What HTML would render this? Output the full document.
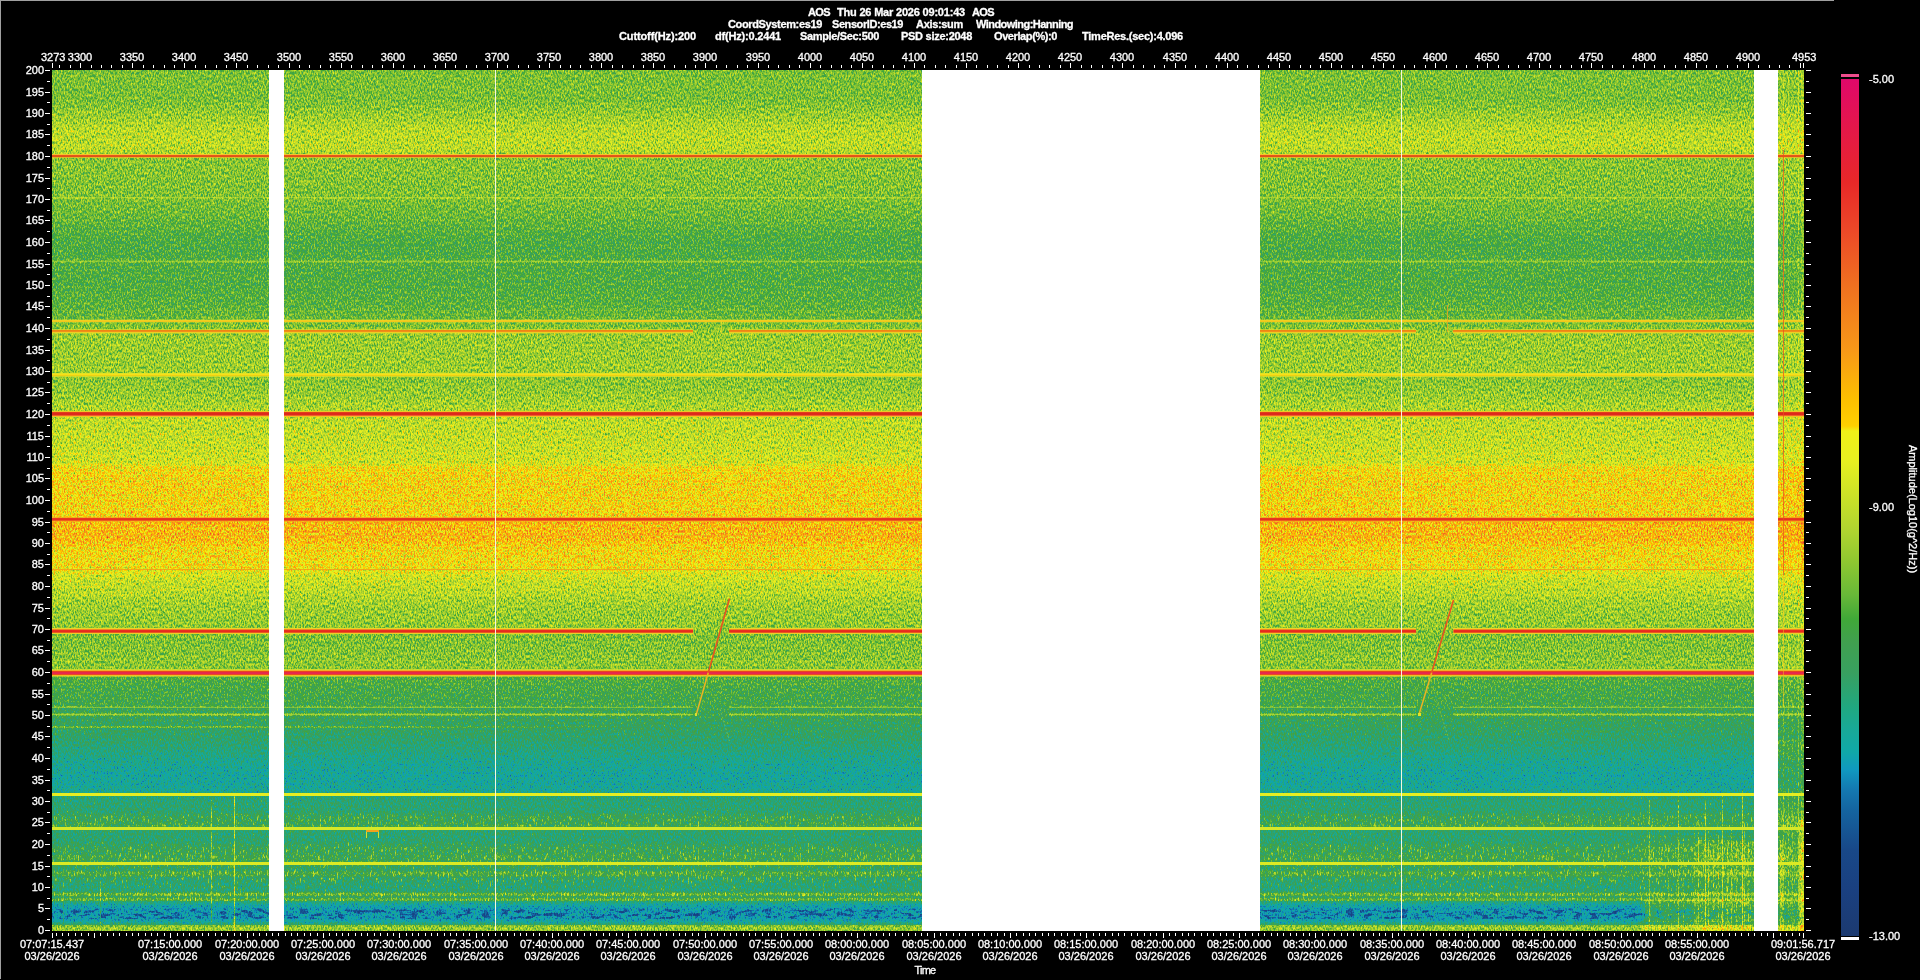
<!DOCTYPE html>
<html lang="en"><head><meta charset="utf-8"><title>AOS Spectrogram es19</title>
<style>
html,body{margin:0;padding:0;background:#000;}
body{width:1920px;height:980px;overflow:hidden;position:relative;font-family:"Liberation Sans",Arial,sans-serif;font-size:11px;color:#fff;line-height:12px;}
.t{position:absolute;white-space:pre;line-height:12px;height:12px;-webkit-text-stroke:0.3px #fff;}
#tx{position:absolute;left:0;top:0;width:1920px;height:980px;will-change:transform;}
.b{font-weight:bold;}
.c{transform:translateX(-50%);text-align:center;}
.r{text-align:right;}
svg{position:absolute;left:0;top:0;}
</style></head><body>
<svg width="1920" height="980" viewBox="0 0 1920 980" shape-rendering="crispEdges">
<defs>
<linearGradient id="prof" gradientUnits="userSpaceOnUse" x1="0" y1="70" x2="0" y2="931">
<stop offset="0.00000" stop-color="rgb(107,0,0)"/>
<stop offset="0.03484" stop-color="rgb(107,0,0)"/>
<stop offset="0.05226" stop-color="rgb(115,0,0)"/>
<stop offset="0.06736" stop-color="rgb(124,0,0)"/>
<stop offset="0.08130" stop-color="rgb(126,0,0)"/>
<stop offset="0.09292" stop-color="rgb(125,0,0)"/>
<stop offset="0.09640" stop-color="rgb(120,0,0)"/>
<stop offset="0.10221" stop-color="rgb(111,0,0)"/>
<stop offset="0.12195" stop-color="rgb(110,0,0)"/>
<stop offset="0.14518" stop-color="rgb(108,0,0)"/>
<stop offset="0.14692" stop-color="rgb(108,0,0)"/>
<stop offset="0.14750" stop-color="rgb(115,0,0)"/>
<stop offset="0.14983" stop-color="rgb(115,0,0)"/>
<stop offset="0.15041" stop-color="rgb(107,0,0)"/>
<stop offset="0.16841" stop-color="rgb(103,0,0)"/>
<stop offset="0.19744" stop-color="rgb(94,0,0)"/>
<stop offset="0.21487" stop-color="rgb(94,0,0)"/>
<stop offset="0.22067" stop-color="rgb(95,0,0)"/>
<stop offset="0.22125" stop-color="rgb(105,0,0)"/>
<stop offset="0.22358" stop-color="rgb(105,0,0)"/>
<stop offset="0.22416" stop-color="rgb(95,0,0)"/>
<stop offset="0.24971" stop-color="rgb(95,0,0)"/>
<stop offset="0.27294" stop-color="rgb(98,0,0)"/>
<stop offset="0.28804" stop-color="rgb(102,0,0)"/>
<stop offset="0.30778" stop-color="rgb(115,0,0)"/>
<stop offset="0.35075" stop-color="rgb(116,0,0)"/>
<stop offset="0.35772" stop-color="rgb(111,0,0)"/>
<stop offset="0.37747" stop-color="rgb(115,0,0)"/>
<stop offset="0.39489" stop-color="rgb(122,0,0)"/>
<stop offset="0.40418" stop-color="rgb(126,0,0)"/>
<stop offset="0.43554" stop-color="rgb(129,0,0)"/>
<stop offset="0.45645" stop-color="rgb(133,0,0)"/>
<stop offset="0.46225" stop-color="rgb(149,0,0)"/>
<stop offset="0.47619" stop-color="rgb(152,0,0)"/>
<stop offset="0.51800" stop-color="rgb(152,0,0)"/>
<stop offset="0.52497" stop-color="rgb(163,0,0)"/>
<stop offset="0.54588" stop-color="rgb(162,0,0)"/>
<stop offset="0.55517" stop-color="rgb(152,0,0)"/>
<stop offset="0.57724" stop-color="rgb(148,0,0)"/>
<stop offset="0.58537" stop-color="rgb(136,0,0)"/>
<stop offset="0.59466" stop-color="rgb(129,0,0)"/>
<stop offset="0.60627" stop-color="rgb(125,0,0)"/>
<stop offset="0.62253" stop-color="rgb(117,0,0)"/>
<stop offset="0.64576" stop-color="rgb(113,0,0)"/>
<stop offset="0.65738" stop-color="rgb(108,0,0)"/>
<stop offset="0.67944" stop-color="rgb(110,0,0)"/>
<stop offset="0.69454" stop-color="rgb(111,0,0)"/>
<stop offset="0.70499" stop-color="rgb(96,0,0)"/>
<stop offset="0.72009" stop-color="rgb(91,0,0)"/>
<stop offset="0.73751" stop-color="rgb(89,0,0)"/>
<stop offset="0.73868" stop-color="rgb(89,0,0)"/>
<stop offset="0.73926" stop-color="rgb(99,0,0)"/>
<stop offset="0.74100" stop-color="rgb(99,0,0)"/>
<stop offset="0.74158" stop-color="rgb(84,0,0)"/>
<stop offset="0.74681" stop-color="rgb(84,0,0)"/>
<stop offset="0.74739" stop-color="rgb(102,0,0)"/>
<stop offset="0.74971" stop-color="rgb(102,0,0)"/>
<stop offset="0.75029" stop-color="rgb(83,0,0)"/>
<stop offset="0.76655" stop-color="rgb(79,0,0)"/>
<stop offset="0.78397" stop-color="rgb(73,0,0)"/>
<stop offset="0.80139" stop-color="rgb(65,0,0)"/>
<stop offset="0.81882" stop-color="rgb(60,0,0)"/>
<stop offset="0.83624" stop-color="rgb(62,0,0)"/>
<stop offset="0.84321" stop-color="rgb(70,0,0)"/>
<stop offset="0.84437" stop-color="rgb(71,64,0)"/>
<stop offset="0.86179" stop-color="rgb(73,76,0)"/>
<stop offset="0.86411" stop-color="rgb(78,178,0)"/>
<stop offset="0.86527" stop-color="rgb(80,180,0)"/>
<stop offset="0.87805" stop-color="rgb(84,191,0)"/>
<stop offset="0.87921" stop-color="rgb(84,76,0)"/>
<stop offset="0.88386" stop-color="rgb(73,76,0)"/>
<stop offset="0.89663" stop-color="rgb(73,76,0)"/>
<stop offset="0.89895" stop-color="rgb(77,191,0)"/>
<stop offset="0.90012" stop-color="rgb(79,192,0)"/>
<stop offset="0.91754" stop-color="rgb(85,204,0)"/>
<stop offset="0.92218" stop-color="rgb(82,153,0)"/>
<stop offset="0.92334" stop-color="rgb(82,153,0)"/>
<stop offset="0.92915" stop-color="rgb(76,153,0)"/>
<stop offset="0.93031" stop-color="rgb(83,153,0)"/>
<stop offset="0.93148" stop-color="rgb(89,230,0)"/>
<stop offset="0.93612" stop-color="rgb(89,230,0)"/>
<stop offset="0.93728" stop-color="rgb(75,255,0)"/>
<stop offset="0.94774" stop-color="rgb(70,204,0)"/>
<stop offset="0.95122" stop-color="rgb(69,147,0)"/>
<stop offset="0.95238" stop-color="rgb(71,128,0)"/>
<stop offset="0.95470" stop-color="rgb(76,153,0)"/>
<stop offset="0.95587" stop-color="rgb(92,242,0)"/>
<stop offset="0.95877" stop-color="rgb(92,242,0)"/>
<stop offset="0.95993" stop-color="rgb(79,153,0)"/>
<stop offset="0.96109" stop-color="rgb(79,153,0)"/>
<stop offset="0.96167" stop-color="rgb(93,242,0)"/>
<stop offset="0.96458" stop-color="rgb(93,242,0)"/>
<stop offset="0.96574" stop-color="rgb(71,76,0)"/>
<stop offset="0.96864" stop-color="rgb(60,51,0)"/>
<stop offset="0.96980" stop-color="rgb(58,0,0)"/>
<stop offset="0.97329" stop-color="rgb(54,0,0)"/>
<stop offset="0.97561" stop-color="rgb(54,0,255)"/>
<stop offset="0.98490" stop-color="rgb(54,0,255)"/>
<stop offset="0.98606" stop-color="rgb(54,0,128)"/>
<stop offset="0.98722" stop-color="rgb(56,0,0)"/>
<stop offset="0.98955" stop-color="rgb(61,0,0)"/>
<stop offset="0.99245" stop-color="rgb(76,0,0)"/>
<stop offset="0.99361" stop-color="rgb(107,0,0)"/>
<stop offset="0.99652" stop-color="rgb(117,0,0)"/>
<stop offset="1.00000" stop-color="rgb(112,0,0)"/>
</linearGradient>
<linearGradient id="cbar" gradientUnits="userSpaceOnUse" x1="0" y1="79" x2="0" y2="936">
<stop offset="0.0000" stop-color="#e0086a"/>
<stop offset="0.0595" stop-color="#e41848"/>
<stop offset="0.1202" stop-color="#e82828"/>
<stop offset="0.1762" stop-color="#ec4828"/>
<stop offset="0.2404" stop-color="#f07020"/>
<stop offset="0.3162" stop-color="#f89818"/>
<stop offset="0.3746" stop-color="#fcc000"/>
<stop offset="0.4049" stop-color="#ffd000"/>
<stop offset="0.4107" stop-color="#f0f018"/>
<stop offset="0.4446" stop-color="#e8f020"/>
<stop offset="0.4912" stop-color="#c8e028"/>
<stop offset="0.5263" stop-color="#b0d430"/>
<stop offset="0.5613" stop-color="#90c830"/>
<stop offset="0.6021" stop-color="#68b838"/>
<stop offset="0.6301" stop-color="#40a838"/>
<stop offset="0.6581" stop-color="#40a050"/>
<stop offset="0.6931" stop-color="#38a060"/>
<stop offset="0.7328" stop-color="#20a880"/>
<stop offset="0.7596" stop-color="#18a898"/>
<stop offset="0.7853" stop-color="#10a8a8"/>
<stop offset="0.8063" stop-color="#1098c0"/>
<stop offset="0.8296" stop-color="#1478b0"/>
<stop offset="0.8530" stop-color="#1464a0"/>
<stop offset="0.8996" stop-color="#184888"/>
<stop offset="0.9463" stop-color="#1a4080"/>
<stop offset="1.0000" stop-color="#1c3a70"/>
</linearGradient>
<filter id="spec" filterUnits="userSpaceOnUse" x="52" y="70" width="1752" height="861" color-interpolation-filters="sRGB">
<feTurbulence type="fractalNoise" baseFrequency="0.7 0.36" numOctaves="2" seed="7" result="n0"/>
<feColorMatrix in="n0" type="matrix" values="1 0 0 0 0  1 0 0 0 0  1 0 0 0 0  0 0 0 0 1" result="n1"/>
<feComponentTransfer in="n1" result="n2"><feFuncR type="table" tableValues="0.295 0.301 0.308 0.314 0.321 0.327 0.333 0.340 0.346 0.353 0.359 0.365 0.372 0.378 0.385 0.391 0.398 0.404 0.410 0.417 0.423 0.430 0.436 0.442 0.449 0.455 0.462 0.468 0.474 0.481 0.487 0.494 0.500 0.506 0.513 0.519 0.526 0.532 0.538 0.545 0.551 0.558 0.564 0.570 0.577 0.583 0.590 0.596 0.603 0.609 0.615 0.622 0.628 0.635 0.641 0.647 0.654 0.660 0.667 0.673 0.679 0.686 0.692 0.699 0.705"/><feFuncG type="table" tableValues="0.295 0.301 0.308 0.314 0.321 0.327 0.333 0.340 0.346 0.353 0.359 0.365 0.372 0.378 0.385 0.391 0.398 0.404 0.410 0.417 0.423 0.430 0.436 0.442 0.449 0.455 0.462 0.468 0.474 0.481 0.487 0.494 0.500 0.506 0.513 0.519 0.526 0.532 0.538 0.545 0.551 0.558 0.564 0.570 0.577 0.583 0.590 0.596 0.603 0.609 0.615 0.622 0.628 0.635 0.641 0.647 0.654 0.660 0.667 0.673 0.679 0.686 0.692 0.699 0.705"/><feFuncB type="table" tableValues="0.295 0.301 0.308 0.314 0.321 0.327 0.333 0.340 0.346 0.353 0.359 0.365 0.372 0.378 0.385 0.391 0.398 0.404 0.410 0.417 0.423 0.430 0.436 0.442 0.449 0.455 0.462 0.468 0.474 0.481 0.487 0.494 0.500 0.506 0.513 0.519 0.526 0.532 0.538 0.545 0.551 0.558 0.564 0.570 0.577 0.583 0.590 0.596 0.603 0.609 0.615 0.622 0.628 0.635 0.641 0.647 0.654 0.660 0.667 0.673 0.679 0.686 0.692 0.699 0.705"/></feComponentTransfer>
<feColorMatrix in="SourceGraphic" type="matrix" values="1 0 0 0 0  1 0 0 0 0  1 0 0 0 0  0 0 0 0 1" result="baseR"/>
<feColorMatrix in="SourceGraphic" type="matrix" values="0 1 0 0 0  0 1 0 0 0  0 1 0 0 0  0 0 0 0 1" result="maskG"/>
<feColorMatrix in="SourceGraphic" type="matrix" values="0 0 1 0 0  0 0 1 0 0  0 0 1 0 0  0 0 0 0 1" result="maskB"/>
<feComposite in="baseR" in2="n2" operator="arithmetic" k1="1.900" k2="0.050" k3="0.200" k4="-0.100" result="amp1"/>
<feTurbulence type="fractalNoise" baseFrequency="0.6 0.13" numOctaves="2" seed="11" result="s0"/>
<feColorMatrix in="s0" type="matrix" values="1 0 0 0 0  1 0 0 0 0  1 0 0 0 0  0 0 0 0 1" result="s1"/>
<feComponentTransfer in="s1" result="s2"><feFuncR type="table" tableValues="0.000 0.000 0.000 0.000 0.000 0.000 0.000 0.000 0.000 0.000 0.000 0.000 0.000 0.000 0.000 0.000 0.000 0.000 0.009 0.033 0.056 0.080 0.103 0.127 0.150 0.150 0.150 0.150 0.150 0.150 0.150 0.150 0.150"/><feFuncG type="table" tableValues="0.000 0.000 0.000 0.000 0.000 0.000 0.000 0.000 0.000 0.000 0.000 0.000 0.000 0.000 0.000 0.000 0.000 0.000 0.009 0.033 0.056 0.080 0.103 0.127 0.150 0.150 0.150 0.150 0.150 0.150 0.150 0.150 0.150"/><feFuncB type="table" tableValues="0.000 0.000 0.000 0.000 0.000 0.000 0.000 0.000 0.000 0.000 0.000 0.000 0.000 0.000 0.000 0.000 0.000 0.000 0.009 0.033 0.056 0.080 0.103 0.127 0.150 0.150 0.150 0.150 0.150 0.150 0.150 0.150 0.150"/></feComponentTransfer>
<feComposite in="s2" in2="maskG" operator="arithmetic" k1="1" k2="0" k3="0" k4="0" result="s3"/>
<feComposite in="amp1" in2="s3" operator="arithmetic" k1="0" k2="1" k3="1" k4="0" result="amp2"/>
<feTurbulence type="fractalNoise" baseFrequency="0.11 0.3" numOctaves="2" seed="5" result="b0"/>
<feColorMatrix in="b0" type="matrix" values="1 0 0 0 0  1 0 0 0 0  1 0 0 0 0  0 0 0 0 1" result="b1"/>
<feComponentTransfer in="b1" result="b2"><feFuncR type="table" tableValues="0.000 0.000 0.000 0.000 0.000 0.000 0.000 0.000 0.000 0.000 0.000 0.000 0.000 0.000 0.000 0.000 0.000 0.020 0.039 0.059 0.078 0.098 0.100 0.100 0.100 0.100 0.100 0.100 0.100 0.100 0.100 0.100 0.100"/><feFuncG type="table" tableValues="0.000 0.000 0.000 0.000 0.000 0.000 0.000 0.000 0.000 0.000 0.000 0.000 0.000 0.000 0.000 0.000 0.000 0.020 0.039 0.059 0.078 0.098 0.100 0.100 0.100 0.100 0.100 0.100 0.100 0.100 0.100 0.100 0.100"/><feFuncB type="table" tableValues="0.000 0.000 0.000 0.000 0.000 0.000 0.000 0.000 0.000 0.000 0.000 0.000 0.000 0.000 0.000 0.000 0.000 0.020 0.039 0.059 0.078 0.098 0.100 0.100 0.100 0.100 0.100 0.100 0.100 0.100 0.100 0.100 0.100"/></feComponentTransfer>
<feComposite in="b2" in2="maskB" operator="arithmetic" k1="1" k2="0" k3="0" k4="0" result="b3"/>
<feComponentTransfer in="b3" result="b4"><feFuncR type="linear" slope="-1" intercept="1"/><feFuncG type="linear" slope="-1" intercept="1"/><feFuncB type="linear" slope="-1" intercept="1"/></feComponentTransfer>
<feComposite in="amp2" in2="b4" operator="arithmetic" k1="0" k2="1" k3="1" k4="-1" result="amp"/>
<feComponentTransfer in="amp"><feFuncR type="table" tableValues="0.110 0.109 0.108 0.106 0.105 0.104 0.103 0.102 0.100 0.099 0.098 0.097 0.095 0.094 0.091 0.088 0.086 0.083 0.081 0.078 0.078 0.078 0.077 0.072 0.067 0.063 0.063 0.063 0.068 0.077 0.087 0.096 0.105 0.115 0.124 0.140 0.159 0.177 0.196 0.214 0.225 0.232 0.239 0.246 0.251 0.251 0.251 0.251 0.280 0.323 0.367 0.410 0.440 0.470 0.500 0.530 0.560 0.588 0.616 0.644 0.672 0.698 0.719 0.740 0.761 0.782 0.803 0.824 0.845 0.866 0.887 0.908 0.916 0.924 0.931 0.938 0.986 0.997 0.994 0.991 0.988 0.986 0.984 0.982 0.980 0.978 0.976 0.974 0.971 0.968 0.965 0.961 0.958 0.955 0.952 0.948 0.945 0.942 0.940 0.938 0.936 0.934 0.932 0.930 0.928 0.926 0.924 0.922 0.920 0.918 0.916 0.913 0.911 0.909 0.907 0.905 0.903 0.901 0.899 0.897 0.895 0.893 0.891 0.889 0.887 0.885 0.883 0.880 0.878"/><feFuncG type="table" tableValues="0.227 0.231 0.234 0.238 0.241 0.245 0.248 0.252 0.257 0.262 0.267 0.273 0.278 0.285 0.304 0.322 0.340 0.359 0.377 0.397 0.423 0.449 0.479 0.521 0.563 0.601 0.624 0.648 0.659 0.659 0.659 0.659 0.659 0.659 0.659 0.654 0.648 0.642 0.635 0.629 0.627 0.627 0.627 0.627 0.630 0.638 0.647 0.656 0.670 0.688 0.705 0.722 0.734 0.746 0.758 0.770 0.782 0.793 0.804 0.814 0.825 0.835 0.846 0.856 0.867 0.877 0.888 0.898 0.909 0.919 0.930 0.940 0.941 0.941 0.941 0.941 0.845 0.802 0.786 0.770 0.754 0.733 0.712 0.691 0.670 0.649 0.628 0.607 0.588 0.572 0.556 0.540 0.524 0.508 0.491 0.475 0.459 0.443 0.425 0.405 0.386 0.367 0.348 0.329 0.310 0.291 0.273 0.255 0.238 0.220 0.203 0.185 0.168 0.154 0.146 0.138 0.130 0.121 0.113 0.105 0.097 0.089 0.081 0.073 0.064 0.056 0.048 0.040 0.031"/><feFuncB type="table" tableValues="0.439 0.448 0.457 0.467 0.476 0.485 0.494 0.503 0.508 0.513 0.518 0.524 0.529 0.536 0.552 0.567 0.583 0.599 0.615 0.631 0.652 0.673 0.694 0.715 0.736 0.746 0.711 0.676 0.649 0.630 0.611 0.590 0.562 0.535 0.508 0.482 0.458 0.433 0.408 0.383 0.366 0.352 0.338 0.324 0.307 0.281 0.255 0.229 0.220 0.220 0.220 0.219 0.213 0.207 0.201 0.195 0.189 0.188 0.188 0.188 0.188 0.186 0.179 0.172 0.165 0.158 0.152 0.147 0.142 0.136 0.131 0.126 0.119 0.112 0.104 0.097 0.022 0.000 0.000 0.000 0.000 0.012 0.024 0.037 0.050 0.062 0.075 0.088 0.096 0.099 0.102 0.105 0.109 0.112 0.115 0.118 0.122 0.125 0.128 0.132 0.136 0.140 0.144 0.148 0.151 0.155 0.157 0.157 0.157 0.157 0.157 0.157 0.157 0.163 0.179 0.195 0.212 0.228 0.244 0.260 0.276 0.293 0.311 0.328 0.346 0.363 0.381 0.398 0.416"/><feFuncA type="linear" slope="0" intercept="1"/></feComponentTransfer>
</filter>
</defs>
<g filter="url(#spec)">
<rect x="52" y="70" width="1752" height="861" fill="url(#prof)"/>
<rect x="691" y="706" width="38" height="10.5" fill="rgb(85,0,0)"/>
<rect x="1416" y="706" width="37" height="10.5" fill="rgb(85,0,0)"/>
<linearGradient id="f47" gradientUnits="userSpaceOnUse" x1="52" y1="0" x2="660" y2="0"><stop offset="0" stop-color="rgb(34,0,0)"/><stop offset="0.6" stop-color="rgb(26,0,0)"/><stop offset="1" stop-color="rgb(0,0,0)"/></linearGradient>
<rect x="52" y="726.3" width="608" height="1.6" fill="url(#f47)" style="mix-blend-mode:screen"/>
<rect x="52" y="659.5" width="1752" height="1.4" fill="rgb(13,0,0)" style="mix-blend-mode:screen"/>
<rect x="52" y="309.5" width="1752" height="1.2" fill="rgb(10,0,0)" style="mix-blend-mode:screen"/>
<rect x="211" y="800" width="1.2" height="122" fill="rgb(51,0,0)" style="mix-blend-mode:screen"/>
<rect x="233.5" y="795" width="1.6" height="136" fill="rgb(71,0,0)" style="mix-blend-mode:screen"/>
<rect x="52" y="893.3" width="1752" height="1.8" fill="rgb(10,0,0)" style="mix-blend-mode:screen"/>
<rect x="52" y="898.5" width="1752" height="1.8" fill="rgb(10,0,0)" style="mix-blend-mode:screen"/>
<rect x="233" y="918" width="3" height="12" fill="rgb(26,0,0)" style="mix-blend-mode:screen"/>
<rect x="100" y="880" width="1" height="45" fill="rgb(26,0,0)" style="mix-blend-mode:screen"/>
<rect x="63" y="880" width="1" height="45" fill="rgb(20,0,0)" style="mix-blend-mode:screen"/>
<rect x="1640" y="835" width="114" height="96" fill="rgb(9,89,0)" style="mix-blend-mode:screen"/>
<rect x="1695" y="840" width="59" height="91" fill="rgb(13,76,0)" style="mix-blend-mode:screen"/>
<rect x="1649" y="800" width="1.3" height="131" fill="rgb(41,0,0)" style="mix-blend-mode:screen"/>
<rect x="1659" y="830" width="1.3" height="101" fill="rgb(20,0,0)" style="mix-blend-mode:screen"/>
<rect x="1668" y="840" width="1.3" height="91" fill="rgb(20,0,0)" style="mix-blend-mode:screen"/>
<rect x="1678" y="790" width="1.3" height="141" fill="rgb(43,0,0)" style="mix-blend-mode:screen"/>
<rect x="1683" y="840" width="1.3" height="91" fill="rgb(20,0,0)" style="mix-blend-mode:screen"/>
<rect x="1694" y="830" width="1.3" height="101" fill="rgb(26,0,0)" style="mix-blend-mode:screen"/>
<rect x="1698" y="820" width="1.3" height="111" fill="rgb(31,0,0)" style="mix-blend-mode:screen"/>
<rect x="1704.5" y="800" width="1.3" height="131" fill="rgb(51,0,0)" style="mix-blend-mode:screen"/>
<rect x="1708" y="830" width="1.3" height="101" fill="rgb(31,0,0)" style="mix-blend-mode:screen"/>
<rect x="1713" y="840" width="1.3" height="91" fill="rgb(26,0,0)" style="mix-blend-mode:screen"/>
<rect x="1718" y="835" width="1.3" height="96" fill="rgb(26,0,0)" style="mix-blend-mode:screen"/>
<rect x="1722" y="795" width="1.3" height="136" fill="rgb(51,0,0)" style="mix-blend-mode:screen"/>
<rect x="1727" y="840" width="1.3" height="91" fill="rgb(26,0,0)" style="mix-blend-mode:screen"/>
<rect x="1731" y="830" width="1.3" height="101" fill="rgb(31,0,0)" style="mix-blend-mode:screen"/>
<rect x="1736" y="840" width="1.3" height="91" fill="rgb(26,0,0)" style="mix-blend-mode:screen"/>
<rect x="1741.5" y="790" width="1.3" height="141" fill="rgb(61,0,0)" style="mix-blend-mode:screen"/>
<rect x="1744" y="820" width="1.3" height="111" fill="rgb(36,0,0)" style="mix-blend-mode:screen"/>
<rect x="1748" y="840" width="1.3" height="91" fill="rgb(26,0,0)" style="mix-blend-mode:screen"/>
<rect x="1690" y="921" width="40" height="9" fill="rgb(13,0,0)" style="mix-blend-mode:screen"/>
<rect x="1640" y="921" width="50" height="9" fill="rgb(10,0,0)" style="mix-blend-mode:screen"/>
<rect x="1645" y="900" width="109" height="22" fill="rgb(26,0,0)" style="mix-blend-mode:screen"/>
<rect x="1778" y="900" width="26" height="22" fill="rgb(23,0,0)" style="mix-blend-mode:screen"/>
<rect x="1778" y="70" width="26" height="861" fill="rgb(8,0,0)" style="mix-blend-mode:screen"/>
<rect x="1778" y="740" width="26" height="191" fill="rgb(15,76,0)" style="mix-blend-mode:screen"/>
<rect x="1783" y="70" width="1.2" height="861" fill="rgb(26,0,0)" style="mix-blend-mode:screen"/>
<rect x="1788" y="70" width="1" height="861" fill="rgb(18,0,0)" style="mix-blend-mode:screen"/>
<rect x="1797.5" y="70" width="1.2" height="861" fill="rgb(26,0,0)" style="mix-blend-mode:screen"/>
<rect x="1801" y="70" width="3" height="861" fill="rgb(18,0,0)" style="mix-blend-mode:screen"/>
<rect x="1792" y="700" width="1" height="231" fill="rgb(15,0,0)" style="mix-blend-mode:screen"/>
<rect x="1780" y="840" width="3" height="91" fill="rgb(31,0,0)" style="mix-blend-mode:screen"/>
<rect x="1799" y="820" width="5" height="111" fill="rgb(41,0,0)" style="mix-blend-mode:screen"/>
</g>
<rect x="52" y="706.5" width="641" height="1.4" fill="#a8d840" opacity="0.5"/>
<rect x="729" y="706.5" width="687" height="1.4" fill="#a8d840" opacity="0.5"/>
<rect x="1453" y="706.5" width="351" height="1.4" fill="#a8d840" opacity="0.5"/>
<rect x="52" y="713.5" width="641" height="1.7" fill="#b8de3a" opacity="0.65"/>
<rect x="729" y="713.5" width="687" height="1.7" fill="#b8de3a" opacity="0.65"/>
<rect x="1453" y="713.5" width="351" height="1.7" fill="#b8de3a" opacity="0.65"/>
<rect x="52" y="196.8" width="1752" height="1.6" fill="#c4e034" opacity="0.5"/>
<rect x="52" y="260.6" width="1752" height="1.6" fill="#b4dc3c" opacity="0.5"/>
<rect x="52" y="154" width="1752" height="1" fill="#f4c42e"/>
<rect x="52" y="155" width="1752" height="1" fill="#e4561a"/>
<rect x="52" y="156" width="1752" height="1" fill="#e25216"/>
<rect x="52" y="157" width="1752" height="1" fill="#eeb828" opacity="0.8"/>
<rect x="52" y="319" width="1752" height="1" fill="#d8e030" opacity="0.35"/>
<rect x="52" y="320" width="1752" height="1" fill="#f0d020"/>
<rect x="52" y="321" width="1752" height="1" fill="#f2c61c"/>
<rect x="52" y="322" width="1752" height="1" fill="#d8e030" opacity="0.35"/>
<rect x="52" y="329" width="641" height="1" fill="#e6dc2a" opacity="0.7"/>
<rect x="729" y="329" width="687" height="1" fill="#e6dc2a" opacity="0.7"/>
<rect x="1453" y="329" width="351" height="1" fill="#e6dc2a" opacity="0.7"/>
<rect x="52" y="330" width="641" height="1" fill="#ee8612"/>
<rect x="729" y="330" width="687" height="1" fill="#ee8612"/>
<rect x="1453" y="330" width="351" height="1" fill="#ee8612"/>
<rect x="52" y="331" width="641" height="1" fill="#f0901a"/>
<rect x="729" y="331" width="687" height="1" fill="#f0901a"/>
<rect x="1453" y="331" width="351" height="1" fill="#f0901a"/>
<rect x="52" y="332" width="641" height="1" fill="#ecd024"/>
<rect x="729" y="332" width="687" height="1" fill="#ecd024"/>
<rect x="1453" y="332" width="351" height="1" fill="#ecd024"/>
<rect x="52" y="333" width="641" height="1" fill="#d8dc30" opacity="0.4"/>
<rect x="729" y="333" width="687" height="1" fill="#d8dc30" opacity="0.4"/>
<rect x="1453" y="333" width="351" height="1" fill="#d8dc30" opacity="0.4"/>
<rect x="52" y="373" width="1752" height="1" fill="#e2e224"/>
<rect x="52" y="374" width="1752" height="1" fill="#f6e01a"/>
<rect x="52" y="375" width="1752" height="1" fill="#eed012"/>
<rect x="52" y="376" width="1752" height="1" fill="#dae02c" opacity="0.8"/>
<rect x="52" y="411" width="1752" height="1" fill="#ecc828"/>
<rect x="52" y="412" width="1752" height="1" fill="#e23c1c"/>
<rect x="52" y="413" width="1752" height="1" fill="#dc281c"/>
<rect x="52" y="414" width="1752" height="1" fill="#de2a1c"/>
<rect x="52" y="415" width="1752" height="1" fill="#f0622a"/>
<rect x="52" y="416" width="1752" height="1" fill="#f0c424"/>
<rect x="52" y="517" width="1752" height="1" fill="#f2a020" opacity="0.7"/>
<rect x="52" y="518" width="1752" height="1" fill="#e8381e"/>
<rect x="52" y="519" width="1752" height="1" fill="#e63020"/>
<rect x="52" y="520" width="1752" height="1" fill="#ee5c20"/>
<rect x="52" y="521" width="1752" height="1" fill="#f4a61e" opacity="0.6"/>
<rect x="52" y="535" width="1752" height="1.4" fill="#f5a21a" opacity="0.5"/>
<rect x="52" y="568.6" width="1752" height="1.4" fill="#f49a18" opacity="0.8"/>
<rect x="52" y="628" width="641" height="1" fill="#ecd42a"/>
<rect x="729" y="628" width="687" height="1" fill="#ecd42a"/>
<rect x="1453" y="628" width="351" height="1" fill="#ecd42a"/>
<rect x="52" y="629" width="641" height="1" fill="#f08a20"/>
<rect x="729" y="629" width="687" height="1" fill="#f08a20"/>
<rect x="1453" y="629" width="351" height="1" fill="#f08a20"/>
<rect x="52" y="630" width="641" height="1" fill="#e8301e"/>
<rect x="729" y="630" width="687" height="1" fill="#e8301e"/>
<rect x="1453" y="630" width="351" height="1" fill="#e8301e"/>
<rect x="52" y="631" width="641" height="1" fill="#e62a1e"/>
<rect x="729" y="631" width="687" height="1" fill="#e62a1e"/>
<rect x="1453" y="631" width="351" height="1" fill="#e62a1e"/>
<rect x="52" y="632" width="641" height="1" fill="#ea5a20"/>
<rect x="729" y="632" width="687" height="1" fill="#ea5a20"/>
<rect x="1453" y="632" width="351" height="1" fill="#ea5a20"/>
<rect x="52" y="633" width="641" height="1" fill="#ecd02a"/>
<rect x="729" y="633" width="687" height="1" fill="#ecd02a"/>
<rect x="1453" y="633" width="351" height="1" fill="#ecd02a"/>
<rect x="52" y="669" width="1752" height="1" fill="#dce02c" opacity="0.8"/>
<rect x="52" y="670" width="1752" height="1" fill="#f2b022"/>
<rect x="52" y="671" width="1752" height="1" fill="#ea4420"/>
<rect x="52" y="672" width="1752" height="1" fill="#e62848"/>
<rect x="52" y="673" width="1752" height="1" fill="#e62850"/>
<rect x="52" y="674" width="1752" height="1" fill="#ea4c20"/>
<rect x="52" y="675" width="1752" height="1" fill="#f0c026"/>
<rect x="52" y="676" width="1752" height="1" fill="#d0dc30" opacity="0.6"/>
<rect x="52" y="793" width="1752" height="3.3" fill="#e6ee22"/>
<rect x="52" y="827" width="1752" height="3" fill="#d6e828"/>
<rect x="52" y="861.6" width="1752" height="3" fill="#dcea24"/>
<g shape-rendering="auto" fill="none" stroke-linecap="butt">
<line x1="696.0" y1="715.5" x2="708.3" y2="672.5" stroke="#eeb422" stroke-width="1.5"/>
<line x1="708.3" y1="672.5" x2="729.5" y2="598.5" stroke="#e8541e" stroke-width="1.6"/>
</g>
<g shape-rendering="auto" fill="none" stroke-linecap="butt">
<line x1="1419.0" y1="714.5" x2="1431.7" y2="672.5" stroke="#eeb422" stroke-width="1.5"/>
<line x1="1431.7" y1="672.5" x2="1453.5" y2="600.0" stroke="#e8541e" stroke-width="1.6"/>
</g>
<rect x="1417.5" y="712.5" width="3" height="3.5" fill="#e6e222"/>
<rect x="694.5" y="713" width="2.5" height="3" fill="#d8e030"/>
<g shape-rendering="auto" stroke="#b4dc3c" stroke-width="1" stroke-dasharray="2 2" opacity=".45" fill="none"><line x1="720" y1="709" x2="729.5" y2="741"/><line x1="1433" y1="688" x2="1449" y2="740"/></g>
<rect x="692.5" y="620" width="1" height="22" fill="#d8e030" opacity=".55"/>
<rect x="721" y="321" width="1" height="13" fill="#e8dc28" opacity=".8"/>
<rect x="1452.5" y="622" width="1" height="20" fill="#d8e030" opacity=".4"/>
<rect x="1447" y="305" width="1" height="27" fill="#f0a020" opacity=".75"/>
<rect x="1783" y="150" width="1" height="425" fill="#e8501e" opacity=".7"/>
<rect x="1783" y="575" width="1" height="130" fill="#f0c020" opacity=".5"/>
<rect x="366" y="829.6" width="13" height="2.6" fill="#f2a21c"/>
<rect x="366" y="832" width="1" height="6" fill="#d2e232"/><rect x="378" y="832" width="1" height="6" fill="#d2e232"/>
<rect x="269" y="70" width="15" height="861" fill="#fff"/>
<rect x="922" y="70" width="338" height="861" fill="#fff"/>
<rect x="1754" y="70" width="24" height="861" fill="#fff"/>
<rect x="495" y="70" width="1" height="861" fill="#f4f6e0"/>
<rect x="1401" y="70" width="1" height="861" fill="#f4f6e0"/>
<rect x="52" y="63" width="1" height="5" fill="#fff"/>
<rect x="1803" y="63" width="1" height="5" fill="#fff"/>
<rect x="59" y="65" width="1" height="3" fill="#fff"/>
<rect x="70" y="65" width="1" height="3" fill="#fff"/>
<rect x="80" y="63" width="1" height="5" fill="#fff"/>
<rect x="91" y="65" width="1" height="3" fill="#fff"/>
<rect x="101" y="65" width="1" height="3" fill="#fff"/>
<rect x="111" y="65" width="1" height="3" fill="#fff"/>
<rect x="122" y="65" width="1" height="3" fill="#fff"/>
<rect x="132" y="63" width="1" height="5" fill="#fff"/>
<rect x="143" y="65" width="1" height="3" fill="#fff"/>
<rect x="153" y="65" width="1" height="3" fill="#fff"/>
<rect x="164" y="65" width="1" height="3" fill="#fff"/>
<rect x="174" y="65" width="1" height="3" fill="#fff"/>
<rect x="184" y="63" width="1" height="5" fill="#fff"/>
<rect x="195" y="65" width="1" height="3" fill="#fff"/>
<rect x="205" y="65" width="1" height="3" fill="#fff"/>
<rect x="216" y="65" width="1" height="3" fill="#fff"/>
<rect x="226" y="65" width="1" height="3" fill="#fff"/>
<rect x="236" y="63" width="1" height="5" fill="#fff"/>
<rect x="247" y="65" width="1" height="3" fill="#fff"/>
<rect x="257" y="65" width="1" height="3" fill="#fff"/>
<rect x="268" y="65" width="1" height="3" fill="#fff"/>
<rect x="278" y="65" width="1" height="3" fill="#fff"/>
<rect x="289" y="63" width="1" height="5" fill="#fff"/>
<rect x="299" y="65" width="1" height="3" fill="#fff"/>
<rect x="309" y="65" width="1" height="3" fill="#fff"/>
<rect x="320" y="65" width="1" height="3" fill="#fff"/>
<rect x="330" y="65" width="1" height="3" fill="#fff"/>
<rect x="341" y="63" width="1" height="5" fill="#fff"/>
<rect x="351" y="65" width="1" height="3" fill="#fff"/>
<rect x="362" y="65" width="1" height="3" fill="#fff"/>
<rect x="372" y="65" width="1" height="3" fill="#fff"/>
<rect x="382" y="65" width="1" height="3" fill="#fff"/>
<rect x="393" y="63" width="1" height="5" fill="#fff"/>
<rect x="403" y="65" width="1" height="3" fill="#fff"/>
<rect x="414" y="65" width="1" height="3" fill="#fff"/>
<rect x="424" y="65" width="1" height="3" fill="#fff"/>
<rect x="435" y="65" width="1" height="3" fill="#fff"/>
<rect x="445" y="63" width="1" height="5" fill="#fff"/>
<rect x="455" y="65" width="1" height="3" fill="#fff"/>
<rect x="466" y="65" width="1" height="3" fill="#fff"/>
<rect x="476" y="65" width="1" height="3" fill="#fff"/>
<rect x="487" y="65" width="1" height="3" fill="#fff"/>
<rect x="497" y="63" width="1" height="5" fill="#fff"/>
<rect x="507" y="65" width="1" height="3" fill="#fff"/>
<rect x="518" y="65" width="1" height="3" fill="#fff"/>
<rect x="528" y="65" width="1" height="3" fill="#fff"/>
<rect x="539" y="65" width="1" height="3" fill="#fff"/>
<rect x="549" y="63" width="1" height="5" fill="#fff"/>
<rect x="560" y="65" width="1" height="3" fill="#fff"/>
<rect x="570" y="65" width="1" height="3" fill="#fff"/>
<rect x="580" y="65" width="1" height="3" fill="#fff"/>
<rect x="591" y="65" width="1" height="3" fill="#fff"/>
<rect x="601" y="63" width="1" height="5" fill="#fff"/>
<rect x="612" y="65" width="1" height="3" fill="#fff"/>
<rect x="622" y="65" width="1" height="3" fill="#fff"/>
<rect x="633" y="65" width="1" height="3" fill="#fff"/>
<rect x="643" y="65" width="1" height="3" fill="#fff"/>
<rect x="653" y="63" width="1" height="5" fill="#fff"/>
<rect x="664" y="65" width="1" height="3" fill="#fff"/>
<rect x="674" y="65" width="1" height="3" fill="#fff"/>
<rect x="685" y="65" width="1" height="3" fill="#fff"/>
<rect x="695" y="65" width="1" height="3" fill="#fff"/>
<rect x="705" y="63" width="1" height="5" fill="#fff"/>
<rect x="716" y="65" width="1" height="3" fill="#fff"/>
<rect x="726" y="65" width="1" height="3" fill="#fff"/>
<rect x="737" y="65" width="1" height="3" fill="#fff"/>
<rect x="747" y="65" width="1" height="3" fill="#fff"/>
<rect x="758" y="63" width="1" height="5" fill="#fff"/>
<rect x="768" y="65" width="1" height="3" fill="#fff"/>
<rect x="778" y="65" width="1" height="3" fill="#fff"/>
<rect x="789" y="65" width="1" height="3" fill="#fff"/>
<rect x="799" y="65" width="1" height="3" fill="#fff"/>
<rect x="810" y="63" width="1" height="5" fill="#fff"/>
<rect x="820" y="65" width="1" height="3" fill="#fff"/>
<rect x="831" y="65" width="1" height="3" fill="#fff"/>
<rect x="841" y="65" width="1" height="3" fill="#fff"/>
<rect x="851" y="65" width="1" height="3" fill="#fff"/>
<rect x="862" y="63" width="1" height="5" fill="#fff"/>
<rect x="872" y="65" width="1" height="3" fill="#fff"/>
<rect x="883" y="65" width="1" height="3" fill="#fff"/>
<rect x="893" y="65" width="1" height="3" fill="#fff"/>
<rect x="904" y="65" width="1" height="3" fill="#fff"/>
<rect x="914" y="63" width="1" height="5" fill="#fff"/>
<rect x="924" y="65" width="1" height="3" fill="#fff"/>
<rect x="935" y="65" width="1" height="3" fill="#fff"/>
<rect x="945" y="65" width="1" height="3" fill="#fff"/>
<rect x="956" y="65" width="1" height="3" fill="#fff"/>
<rect x="966" y="63" width="1" height="5" fill="#fff"/>
<rect x="976" y="65" width="1" height="3" fill="#fff"/>
<rect x="987" y="65" width="1" height="3" fill="#fff"/>
<rect x="997" y="65" width="1" height="3" fill="#fff"/>
<rect x="1008" y="65" width="1" height="3" fill="#fff"/>
<rect x="1018" y="63" width="1" height="5" fill="#fff"/>
<rect x="1029" y="65" width="1" height="3" fill="#fff"/>
<rect x="1039" y="65" width="1" height="3" fill="#fff"/>
<rect x="1049" y="65" width="1" height="3" fill="#fff"/>
<rect x="1060" y="65" width="1" height="3" fill="#fff"/>
<rect x="1070" y="63" width="1" height="5" fill="#fff"/>
<rect x="1081" y="65" width="1" height="3" fill="#fff"/>
<rect x="1091" y="65" width="1" height="3" fill="#fff"/>
<rect x="1102" y="65" width="1" height="3" fill="#fff"/>
<rect x="1112" y="65" width="1" height="3" fill="#fff"/>
<rect x="1122" y="63" width="1" height="5" fill="#fff"/>
<rect x="1133" y="65" width="1" height="3" fill="#fff"/>
<rect x="1143" y="65" width="1" height="3" fill="#fff"/>
<rect x="1154" y="65" width="1" height="3" fill="#fff"/>
<rect x="1164" y="65" width="1" height="3" fill="#fff"/>
<rect x="1175" y="63" width="1" height="5" fill="#fff"/>
<rect x="1185" y="65" width="1" height="3" fill="#fff"/>
<rect x="1195" y="65" width="1" height="3" fill="#fff"/>
<rect x="1206" y="65" width="1" height="3" fill="#fff"/>
<rect x="1216" y="65" width="1" height="3" fill="#fff"/>
<rect x="1227" y="63" width="1" height="5" fill="#fff"/>
<rect x="1237" y="65" width="1" height="3" fill="#fff"/>
<rect x="1247" y="65" width="1" height="3" fill="#fff"/>
<rect x="1258" y="65" width="1" height="3" fill="#fff"/>
<rect x="1268" y="65" width="1" height="3" fill="#fff"/>
<rect x="1279" y="63" width="1" height="5" fill="#fff"/>
<rect x="1289" y="65" width="1" height="3" fill="#fff"/>
<rect x="1300" y="65" width="1" height="3" fill="#fff"/>
<rect x="1310" y="65" width="1" height="3" fill="#fff"/>
<rect x="1320" y="65" width="1" height="3" fill="#fff"/>
<rect x="1331" y="63" width="1" height="5" fill="#fff"/>
<rect x="1341" y="65" width="1" height="3" fill="#fff"/>
<rect x="1352" y="65" width="1" height="3" fill="#fff"/>
<rect x="1362" y="65" width="1" height="3" fill="#fff"/>
<rect x="1373" y="65" width="1" height="3" fill="#fff"/>
<rect x="1383" y="63" width="1" height="5" fill="#fff"/>
<rect x="1393" y="65" width="1" height="3" fill="#fff"/>
<rect x="1404" y="65" width="1" height="3" fill="#fff"/>
<rect x="1414" y="65" width="1" height="3" fill="#fff"/>
<rect x="1425" y="65" width="1" height="3" fill="#fff"/>
<rect x="1435" y="63" width="1" height="5" fill="#fff"/>
<rect x="1446" y="65" width="1" height="3" fill="#fff"/>
<rect x="1456" y="65" width="1" height="3" fill="#fff"/>
<rect x="1466" y="65" width="1" height="3" fill="#fff"/>
<rect x="1477" y="65" width="1" height="3" fill="#fff"/>
<rect x="1487" y="63" width="1" height="5" fill="#fff"/>
<rect x="1498" y="65" width="1" height="3" fill="#fff"/>
<rect x="1508" y="65" width="1" height="3" fill="#fff"/>
<rect x="1518" y="65" width="1" height="3" fill="#fff"/>
<rect x="1529" y="65" width="1" height="3" fill="#fff"/>
<rect x="1539" y="63" width="1" height="5" fill="#fff"/>
<rect x="1550" y="65" width="1" height="3" fill="#fff"/>
<rect x="1560" y="65" width="1" height="3" fill="#fff"/>
<rect x="1571" y="65" width="1" height="3" fill="#fff"/>
<rect x="1581" y="65" width="1" height="3" fill="#fff"/>
<rect x="1591" y="63" width="1" height="5" fill="#fff"/>
<rect x="1602" y="65" width="1" height="3" fill="#fff"/>
<rect x="1612" y="65" width="1" height="3" fill="#fff"/>
<rect x="1623" y="65" width="1" height="3" fill="#fff"/>
<rect x="1633" y="65" width="1" height="3" fill="#fff"/>
<rect x="1644" y="63" width="1" height="5" fill="#fff"/>
<rect x="1654" y="65" width="1" height="3" fill="#fff"/>
<rect x="1664" y="65" width="1" height="3" fill="#fff"/>
<rect x="1675" y="65" width="1" height="3" fill="#fff"/>
<rect x="1685" y="65" width="1" height="3" fill="#fff"/>
<rect x="1696" y="63" width="1" height="5" fill="#fff"/>
<rect x="1706" y="65" width="1" height="3" fill="#fff"/>
<rect x="1716" y="65" width="1" height="3" fill="#fff"/>
<rect x="1727" y="65" width="1" height="3" fill="#fff"/>
<rect x="1737" y="65" width="1" height="3" fill="#fff"/>
<rect x="1748" y="63" width="1" height="5" fill="#fff"/>
<rect x="1758" y="65" width="1" height="3" fill="#fff"/>
<rect x="1769" y="65" width="1" height="3" fill="#fff"/>
<rect x="1779" y="65" width="1" height="3" fill="#fff"/>
<rect x="1789" y="65" width="1" height="3" fill="#fff"/>
<rect x="1800" y="63" width="1" height="5" fill="#fff"/>
<rect x="52" y="933" width="1" height="5" fill="#fff"/>
<rect x="1803" y="933" width="1" height="5" fill="#fff"/>
<rect x="56" y="933" width="1" height="3" fill="#fff"/>
<rect x="62" y="933" width="1" height="3" fill="#fff"/>
<rect x="68" y="933" width="1" height="3" fill="#fff"/>
<rect x="75" y="933" width="1" height="3" fill="#fff"/>
<rect x="81" y="933" width="1" height="3" fill="#fff"/>
<rect x="88" y="933" width="1" height="3" fill="#fff"/>
<rect x="94" y="933" width="1" height="5" fill="#fff"/>
<rect x="100" y="933" width="1" height="3" fill="#fff"/>
<rect x="107" y="933" width="1" height="3" fill="#fff"/>
<rect x="113" y="933" width="1" height="3" fill="#fff"/>
<rect x="119" y="933" width="1" height="3" fill="#fff"/>
<rect x="126" y="933" width="1" height="3" fill="#fff"/>
<rect x="132" y="933" width="1" height="3" fill="#fff"/>
<rect x="138" y="933" width="1" height="3" fill="#fff"/>
<rect x="145" y="933" width="1" height="3" fill="#fff"/>
<rect x="151" y="933" width="1" height="3" fill="#fff"/>
<rect x="157" y="933" width="1" height="3" fill="#fff"/>
<rect x="164" y="933" width="1" height="3" fill="#fff"/>
<rect x="170" y="933" width="1" height="5" fill="#fff"/>
<rect x="177" y="933" width="1" height="3" fill="#fff"/>
<rect x="183" y="933" width="1" height="3" fill="#fff"/>
<rect x="189" y="933" width="1" height="3" fill="#fff"/>
<rect x="196" y="933" width="1" height="3" fill="#fff"/>
<rect x="202" y="933" width="1" height="3" fill="#fff"/>
<rect x="208" y="933" width="1" height="3" fill="#fff"/>
<rect x="215" y="933" width="1" height="3" fill="#fff"/>
<rect x="221" y="933" width="1" height="3" fill="#fff"/>
<rect x="227" y="933" width="1" height="3" fill="#fff"/>
<rect x="234" y="933" width="1" height="3" fill="#fff"/>
<rect x="240" y="933" width="1" height="3" fill="#fff"/>
<rect x="247" y="933" width="1" height="5" fill="#fff"/>
<rect x="253" y="933" width="1" height="3" fill="#fff"/>
<rect x="259" y="933" width="1" height="3" fill="#fff"/>
<rect x="266" y="933" width="1" height="3" fill="#fff"/>
<rect x="272" y="933" width="1" height="3" fill="#fff"/>
<rect x="278" y="933" width="1" height="3" fill="#fff"/>
<rect x="285" y="933" width="1" height="3" fill="#fff"/>
<rect x="291" y="933" width="1" height="3" fill="#fff"/>
<rect x="297" y="933" width="1" height="3" fill="#fff"/>
<rect x="304" y="933" width="1" height="3" fill="#fff"/>
<rect x="310" y="933" width="1" height="3" fill="#fff"/>
<rect x="317" y="933" width="1" height="3" fill="#fff"/>
<rect x="323" y="933" width="1" height="5" fill="#fff"/>
<rect x="329" y="933" width="1" height="3" fill="#fff"/>
<rect x="336" y="933" width="1" height="3" fill="#fff"/>
<rect x="342" y="933" width="1" height="3" fill="#fff"/>
<rect x="348" y="933" width="1" height="3" fill="#fff"/>
<rect x="355" y="933" width="1" height="3" fill="#fff"/>
<rect x="361" y="933" width="1" height="3" fill="#fff"/>
<rect x="367" y="933" width="1" height="3" fill="#fff"/>
<rect x="374" y="933" width="1" height="3" fill="#fff"/>
<rect x="380" y="933" width="1" height="3" fill="#fff"/>
<rect x="387" y="933" width="1" height="3" fill="#fff"/>
<rect x="393" y="933" width="1" height="3" fill="#fff"/>
<rect x="399" y="933" width="1" height="5" fill="#fff"/>
<rect x="406" y="933" width="1" height="3" fill="#fff"/>
<rect x="412" y="933" width="1" height="3" fill="#fff"/>
<rect x="418" y="933" width="1" height="3" fill="#fff"/>
<rect x="425" y="933" width="1" height="3" fill="#fff"/>
<rect x="431" y="933" width="1" height="3" fill="#fff"/>
<rect x="437" y="933" width="1" height="3" fill="#fff"/>
<rect x="444" y="933" width="1" height="3" fill="#fff"/>
<rect x="450" y="933" width="1" height="3" fill="#fff"/>
<rect x="456" y="933" width="1" height="3" fill="#fff"/>
<rect x="463" y="933" width="1" height="3" fill="#fff"/>
<rect x="469" y="933" width="1" height="3" fill="#fff"/>
<rect x="476" y="933" width="1" height="5" fill="#fff"/>
<rect x="482" y="933" width="1" height="3" fill="#fff"/>
<rect x="488" y="933" width="1" height="3" fill="#fff"/>
<rect x="495" y="933" width="1" height="3" fill="#fff"/>
<rect x="501" y="933" width="1" height="3" fill="#fff"/>
<rect x="507" y="933" width="1" height="3" fill="#fff"/>
<rect x="514" y="933" width="1" height="3" fill="#fff"/>
<rect x="520" y="933" width="1" height="3" fill="#fff"/>
<rect x="526" y="933" width="1" height="3" fill="#fff"/>
<rect x="533" y="933" width="1" height="3" fill="#fff"/>
<rect x="539" y="933" width="1" height="3" fill="#fff"/>
<rect x="546" y="933" width="1" height="3" fill="#fff"/>
<rect x="552" y="933" width="1" height="5" fill="#fff"/>
<rect x="558" y="933" width="1" height="3" fill="#fff"/>
<rect x="565" y="933" width="1" height="3" fill="#fff"/>
<rect x="571" y="933" width="1" height="3" fill="#fff"/>
<rect x="577" y="933" width="1" height="3" fill="#fff"/>
<rect x="584" y="933" width="1" height="3" fill="#fff"/>
<rect x="590" y="933" width="1" height="3" fill="#fff"/>
<rect x="596" y="933" width="1" height="3" fill="#fff"/>
<rect x="603" y="933" width="1" height="3" fill="#fff"/>
<rect x="609" y="933" width="1" height="3" fill="#fff"/>
<rect x="616" y="933" width="1" height="3" fill="#fff"/>
<rect x="622" y="933" width="1" height="3" fill="#fff"/>
<rect x="628" y="933" width="1" height="5" fill="#fff"/>
<rect x="635" y="933" width="1" height="3" fill="#fff"/>
<rect x="641" y="933" width="1" height="3" fill="#fff"/>
<rect x="647" y="933" width="1" height="3" fill="#fff"/>
<rect x="654" y="933" width="1" height="3" fill="#fff"/>
<rect x="660" y="933" width="1" height="3" fill="#fff"/>
<rect x="666" y="933" width="1" height="3" fill="#fff"/>
<rect x="673" y="933" width="1" height="3" fill="#fff"/>
<rect x="679" y="933" width="1" height="3" fill="#fff"/>
<rect x="685" y="933" width="1" height="3" fill="#fff"/>
<rect x="692" y="933" width="1" height="3" fill="#fff"/>
<rect x="698" y="933" width="1" height="3" fill="#fff"/>
<rect x="705" y="933" width="1" height="5" fill="#fff"/>
<rect x="711" y="933" width="1" height="3" fill="#fff"/>
<rect x="717" y="933" width="1" height="3" fill="#fff"/>
<rect x="724" y="933" width="1" height="3" fill="#fff"/>
<rect x="730" y="933" width="1" height="3" fill="#fff"/>
<rect x="736" y="933" width="1" height="3" fill="#fff"/>
<rect x="743" y="933" width="1" height="3" fill="#fff"/>
<rect x="749" y="933" width="1" height="3" fill="#fff"/>
<rect x="755" y="933" width="1" height="3" fill="#fff"/>
<rect x="762" y="933" width="1" height="3" fill="#fff"/>
<rect x="768" y="933" width="1" height="3" fill="#fff"/>
<rect x="775" y="933" width="1" height="3" fill="#fff"/>
<rect x="781" y="933" width="1" height="5" fill="#fff"/>
<rect x="787" y="933" width="1" height="3" fill="#fff"/>
<rect x="794" y="933" width="1" height="3" fill="#fff"/>
<rect x="800" y="933" width="1" height="3" fill="#fff"/>
<rect x="806" y="933" width="1" height="3" fill="#fff"/>
<rect x="813" y="933" width="1" height="3" fill="#fff"/>
<rect x="819" y="933" width="1" height="3" fill="#fff"/>
<rect x="825" y="933" width="1" height="3" fill="#fff"/>
<rect x="832" y="933" width="1" height="3" fill="#fff"/>
<rect x="838" y="933" width="1" height="3" fill="#fff"/>
<rect x="845" y="933" width="1" height="3" fill="#fff"/>
<rect x="851" y="933" width="1" height="3" fill="#fff"/>
<rect x="857" y="933" width="1" height="5" fill="#fff"/>
<rect x="864" y="933" width="1" height="3" fill="#fff"/>
<rect x="870" y="933" width="1" height="3" fill="#fff"/>
<rect x="876" y="933" width="1" height="3" fill="#fff"/>
<rect x="883" y="933" width="1" height="3" fill="#fff"/>
<rect x="889" y="933" width="1" height="3" fill="#fff"/>
<rect x="895" y="933" width="1" height="3" fill="#fff"/>
<rect x="902" y="933" width="1" height="3" fill="#fff"/>
<rect x="908" y="933" width="1" height="3" fill="#fff"/>
<rect x="915" y="933" width="1" height="3" fill="#fff"/>
<rect x="921" y="933" width="1" height="3" fill="#fff"/>
<rect x="927" y="933" width="1" height="3" fill="#fff"/>
<rect x="934" y="933" width="1" height="5" fill="#fff"/>
<rect x="940" y="933" width="1" height="3" fill="#fff"/>
<rect x="946" y="933" width="1" height="3" fill="#fff"/>
<rect x="953" y="933" width="1" height="3" fill="#fff"/>
<rect x="959" y="933" width="1" height="3" fill="#fff"/>
<rect x="965" y="933" width="1" height="3" fill="#fff"/>
<rect x="972" y="933" width="1" height="3" fill="#fff"/>
<rect x="978" y="933" width="1" height="3" fill="#fff"/>
<rect x="984" y="933" width="1" height="3" fill="#fff"/>
<rect x="991" y="933" width="1" height="3" fill="#fff"/>
<rect x="997" y="933" width="1" height="3" fill="#fff"/>
<rect x="1004" y="933" width="1" height="3" fill="#fff"/>
<rect x="1010" y="933" width="1" height="5" fill="#fff"/>
<rect x="1016" y="933" width="1" height="3" fill="#fff"/>
<rect x="1023" y="933" width="1" height="3" fill="#fff"/>
<rect x="1029" y="933" width="1" height="3" fill="#fff"/>
<rect x="1035" y="933" width="1" height="3" fill="#fff"/>
<rect x="1042" y="933" width="1" height="3" fill="#fff"/>
<rect x="1048" y="933" width="1" height="3" fill="#fff"/>
<rect x="1054" y="933" width="1" height="3" fill="#fff"/>
<rect x="1061" y="933" width="1" height="3" fill="#fff"/>
<rect x="1067" y="933" width="1" height="3" fill="#fff"/>
<rect x="1074" y="933" width="1" height="3" fill="#fff"/>
<rect x="1080" y="933" width="1" height="3" fill="#fff"/>
<rect x="1086" y="933" width="1" height="5" fill="#fff"/>
<rect x="1093" y="933" width="1" height="3" fill="#fff"/>
<rect x="1099" y="933" width="1" height="3" fill="#fff"/>
<rect x="1105" y="933" width="1" height="3" fill="#fff"/>
<rect x="1112" y="933" width="1" height="3" fill="#fff"/>
<rect x="1118" y="933" width="1" height="3" fill="#fff"/>
<rect x="1124" y="933" width="1" height="3" fill="#fff"/>
<rect x="1131" y="933" width="1" height="3" fill="#fff"/>
<rect x="1137" y="933" width="1" height="3" fill="#fff"/>
<rect x="1144" y="933" width="1" height="3" fill="#fff"/>
<rect x="1150" y="933" width="1" height="3" fill="#fff"/>
<rect x="1156" y="933" width="1" height="3" fill="#fff"/>
<rect x="1163" y="933" width="1" height="5" fill="#fff"/>
<rect x="1169" y="933" width="1" height="3" fill="#fff"/>
<rect x="1175" y="933" width="1" height="3" fill="#fff"/>
<rect x="1182" y="933" width="1" height="3" fill="#fff"/>
<rect x="1188" y="933" width="1" height="3" fill="#fff"/>
<rect x="1194" y="933" width="1" height="3" fill="#fff"/>
<rect x="1201" y="933" width="1" height="3" fill="#fff"/>
<rect x="1207" y="933" width="1" height="3" fill="#fff"/>
<rect x="1213" y="933" width="1" height="3" fill="#fff"/>
<rect x="1220" y="933" width="1" height="3" fill="#fff"/>
<rect x="1226" y="933" width="1" height="3" fill="#fff"/>
<rect x="1233" y="933" width="1" height="3" fill="#fff"/>
<rect x="1239" y="933" width="1" height="5" fill="#fff"/>
<rect x="1245" y="933" width="1" height="3" fill="#fff"/>
<rect x="1252" y="933" width="1" height="3" fill="#fff"/>
<rect x="1258" y="933" width="1" height="3" fill="#fff"/>
<rect x="1264" y="933" width="1" height="3" fill="#fff"/>
<rect x="1271" y="933" width="1" height="3" fill="#fff"/>
<rect x="1277" y="933" width="1" height="3" fill="#fff"/>
<rect x="1283" y="933" width="1" height="3" fill="#fff"/>
<rect x="1290" y="933" width="1" height="3" fill="#fff"/>
<rect x="1296" y="933" width="1" height="3" fill="#fff"/>
<rect x="1303" y="933" width="1" height="3" fill="#fff"/>
<rect x="1309" y="933" width="1" height="3" fill="#fff"/>
<rect x="1315" y="933" width="1" height="5" fill="#fff"/>
<rect x="1322" y="933" width="1" height="3" fill="#fff"/>
<rect x="1328" y="933" width="1" height="3" fill="#fff"/>
<rect x="1334" y="933" width="1" height="3" fill="#fff"/>
<rect x="1341" y="933" width="1" height="3" fill="#fff"/>
<rect x="1347" y="933" width="1" height="3" fill="#fff"/>
<rect x="1353" y="933" width="1" height="3" fill="#fff"/>
<rect x="1360" y="933" width="1" height="3" fill="#fff"/>
<rect x="1366" y="933" width="1" height="3" fill="#fff"/>
<rect x="1373" y="933" width="1" height="3" fill="#fff"/>
<rect x="1379" y="933" width="1" height="3" fill="#fff"/>
<rect x="1385" y="933" width="1" height="3" fill="#fff"/>
<rect x="1392" y="933" width="1" height="5" fill="#fff"/>
<rect x="1398" y="933" width="1" height="3" fill="#fff"/>
<rect x="1404" y="933" width="1" height="3" fill="#fff"/>
<rect x="1411" y="933" width="1" height="3" fill="#fff"/>
<rect x="1417" y="933" width="1" height="3" fill="#fff"/>
<rect x="1423" y="933" width="1" height="3" fill="#fff"/>
<rect x="1430" y="933" width="1" height="3" fill="#fff"/>
<rect x="1436" y="933" width="1" height="3" fill="#fff"/>
<rect x="1443" y="933" width="1" height="3" fill="#fff"/>
<rect x="1449" y="933" width="1" height="3" fill="#fff"/>
<rect x="1455" y="933" width="1" height="3" fill="#fff"/>
<rect x="1462" y="933" width="1" height="3" fill="#fff"/>
<rect x="1468" y="933" width="1" height="5" fill="#fff"/>
<rect x="1474" y="933" width="1" height="3" fill="#fff"/>
<rect x="1481" y="933" width="1" height="3" fill="#fff"/>
<rect x="1487" y="933" width="1" height="3" fill="#fff"/>
<rect x="1493" y="933" width="1" height="3" fill="#fff"/>
<rect x="1500" y="933" width="1" height="3" fill="#fff"/>
<rect x="1506" y="933" width="1" height="3" fill="#fff"/>
<rect x="1512" y="933" width="1" height="3" fill="#fff"/>
<rect x="1519" y="933" width="1" height="3" fill="#fff"/>
<rect x="1525" y="933" width="1" height="3" fill="#fff"/>
<rect x="1532" y="933" width="1" height="3" fill="#fff"/>
<rect x="1538" y="933" width="1" height="3" fill="#fff"/>
<rect x="1544" y="933" width="1" height="5" fill="#fff"/>
<rect x="1551" y="933" width="1" height="3" fill="#fff"/>
<rect x="1557" y="933" width="1" height="3" fill="#fff"/>
<rect x="1563" y="933" width="1" height="3" fill="#fff"/>
<rect x="1570" y="933" width="1" height="3" fill="#fff"/>
<rect x="1576" y="933" width="1" height="3" fill="#fff"/>
<rect x="1582" y="933" width="1" height="3" fill="#fff"/>
<rect x="1589" y="933" width="1" height="3" fill="#fff"/>
<rect x="1595" y="933" width="1" height="3" fill="#fff"/>
<rect x="1602" y="933" width="1" height="3" fill="#fff"/>
<rect x="1608" y="933" width="1" height="3" fill="#fff"/>
<rect x="1614" y="933" width="1" height="3" fill="#fff"/>
<rect x="1621" y="933" width="1" height="5" fill="#fff"/>
<rect x="1627" y="933" width="1" height="3" fill="#fff"/>
<rect x="1633" y="933" width="1" height="3" fill="#fff"/>
<rect x="1640" y="933" width="1" height="3" fill="#fff"/>
<rect x="1646" y="933" width="1" height="3" fill="#fff"/>
<rect x="1652" y="933" width="1" height="3" fill="#fff"/>
<rect x="1659" y="933" width="1" height="3" fill="#fff"/>
<rect x="1665" y="933" width="1" height="3" fill="#fff"/>
<rect x="1672" y="933" width="1" height="3" fill="#fff"/>
<rect x="1678" y="933" width="1" height="3" fill="#fff"/>
<rect x="1684" y="933" width="1" height="3" fill="#fff"/>
<rect x="1691" y="933" width="1" height="3" fill="#fff"/>
<rect x="1697" y="933" width="1" height="5" fill="#fff"/>
<rect x="1703" y="933" width="1" height="3" fill="#fff"/>
<rect x="1710" y="933" width="1" height="3" fill="#fff"/>
<rect x="1716" y="933" width="1" height="3" fill="#fff"/>
<rect x="1722" y="933" width="1" height="3" fill="#fff"/>
<rect x="1729" y="933" width="1" height="3" fill="#fff"/>
<rect x="1735" y="933" width="1" height="3" fill="#fff"/>
<rect x="1741" y="933" width="1" height="3" fill="#fff"/>
<rect x="1748" y="933" width="1" height="3" fill="#fff"/>
<rect x="1754" y="933" width="1" height="3" fill="#fff"/>
<rect x="1761" y="933" width="1" height="3" fill="#fff"/>
<rect x="1767" y="933" width="1" height="3" fill="#fff"/>
<rect x="1773" y="933" width="1" height="5" fill="#fff"/>
<rect x="1780" y="933" width="1" height="3" fill="#fff"/>
<rect x="1786" y="933" width="1" height="3" fill="#fff"/>
<rect x="1792" y="933" width="1" height="3" fill="#fff"/>
<rect x="1799" y="933" width="1" height="3" fill="#fff"/>
<rect x="45" y="930" width="5" height="1" fill="#fff"/>
<rect x="1806" y="930" width="5" height="1" fill="#fff"/>
<rect x="47" y="919" width="3" height="1" fill="#fff"/>
<rect x="1806" y="919" width="3" height="1" fill="#fff"/>
<rect x="45" y="908" width="5" height="1" fill="#fff"/>
<rect x="1806" y="908" width="5" height="1" fill="#fff"/>
<rect x="47" y="898" width="3" height="1" fill="#fff"/>
<rect x="1806" y="898" width="3" height="1" fill="#fff"/>
<rect x="45" y="887" width="5" height="1" fill="#fff"/>
<rect x="1806" y="887" width="5" height="1" fill="#fff"/>
<rect x="47" y="876" width="3" height="1" fill="#fff"/>
<rect x="1806" y="876" width="3" height="1" fill="#fff"/>
<rect x="45" y="866" width="5" height="1" fill="#fff"/>
<rect x="1806" y="866" width="5" height="1" fill="#fff"/>
<rect x="47" y="855" width="3" height="1" fill="#fff"/>
<rect x="1806" y="855" width="3" height="1" fill="#fff"/>
<rect x="45" y="844" width="5" height="1" fill="#fff"/>
<rect x="1806" y="844" width="5" height="1" fill="#fff"/>
<rect x="47" y="833" width="3" height="1" fill="#fff"/>
<rect x="1806" y="833" width="3" height="1" fill="#fff"/>
<rect x="45" y="822" width="5" height="1" fill="#fff"/>
<rect x="1806" y="822" width="5" height="1" fill="#fff"/>
<rect x="47" y="812" width="3" height="1" fill="#fff"/>
<rect x="1806" y="812" width="3" height="1" fill="#fff"/>
<rect x="45" y="801" width="5" height="1" fill="#fff"/>
<rect x="1806" y="801" width="5" height="1" fill="#fff"/>
<rect x="47" y="790" width="3" height="1" fill="#fff"/>
<rect x="1806" y="790" width="3" height="1" fill="#fff"/>
<rect x="45" y="780" width="5" height="1" fill="#fff"/>
<rect x="1806" y="780" width="5" height="1" fill="#fff"/>
<rect x="47" y="769" width="3" height="1" fill="#fff"/>
<rect x="1806" y="769" width="3" height="1" fill="#fff"/>
<rect x="45" y="758" width="5" height="1" fill="#fff"/>
<rect x="1806" y="758" width="5" height="1" fill="#fff"/>
<rect x="47" y="747" width="3" height="1" fill="#fff"/>
<rect x="1806" y="747" width="3" height="1" fill="#fff"/>
<rect x="45" y="736" width="5" height="1" fill="#fff"/>
<rect x="1806" y="736" width="5" height="1" fill="#fff"/>
<rect x="47" y="726" width="3" height="1" fill="#fff"/>
<rect x="1806" y="726" width="3" height="1" fill="#fff"/>
<rect x="45" y="715" width="5" height="1" fill="#fff"/>
<rect x="1806" y="715" width="5" height="1" fill="#fff"/>
<rect x="47" y="704" width="3" height="1" fill="#fff"/>
<rect x="1806" y="704" width="3" height="1" fill="#fff"/>
<rect x="45" y="694" width="5" height="1" fill="#fff"/>
<rect x="1806" y="694" width="5" height="1" fill="#fff"/>
<rect x="47" y="683" width="3" height="1" fill="#fff"/>
<rect x="1806" y="683" width="3" height="1" fill="#fff"/>
<rect x="45" y="672" width="5" height="1" fill="#fff"/>
<rect x="1806" y="672" width="5" height="1" fill="#fff"/>
<rect x="47" y="661" width="3" height="1" fill="#fff"/>
<rect x="1806" y="661" width="3" height="1" fill="#fff"/>
<rect x="45" y="650" width="5" height="1" fill="#fff"/>
<rect x="1806" y="650" width="5" height="1" fill="#fff"/>
<rect x="47" y="640" width="3" height="1" fill="#fff"/>
<rect x="1806" y="640" width="3" height="1" fill="#fff"/>
<rect x="45" y="629" width="5" height="1" fill="#fff"/>
<rect x="1806" y="629" width="5" height="1" fill="#fff"/>
<rect x="47" y="618" width="3" height="1" fill="#fff"/>
<rect x="1806" y="618" width="3" height="1" fill="#fff"/>
<rect x="45" y="608" width="5" height="1" fill="#fff"/>
<rect x="1806" y="608" width="5" height="1" fill="#fff"/>
<rect x="47" y="597" width="3" height="1" fill="#fff"/>
<rect x="1806" y="597" width="3" height="1" fill="#fff"/>
<rect x="45" y="586" width="5" height="1" fill="#fff"/>
<rect x="1806" y="586" width="5" height="1" fill="#fff"/>
<rect x="47" y="575" width="3" height="1" fill="#fff"/>
<rect x="1806" y="575" width="3" height="1" fill="#fff"/>
<rect x="45" y="564" width="5" height="1" fill="#fff"/>
<rect x="1806" y="564" width="5" height="1" fill="#fff"/>
<rect x="47" y="554" width="3" height="1" fill="#fff"/>
<rect x="1806" y="554" width="3" height="1" fill="#fff"/>
<rect x="45" y="543" width="5" height="1" fill="#fff"/>
<rect x="1806" y="543" width="5" height="1" fill="#fff"/>
<rect x="47" y="532" width="3" height="1" fill="#fff"/>
<rect x="1806" y="532" width="3" height="1" fill="#fff"/>
<rect x="45" y="522" width="5" height="1" fill="#fff"/>
<rect x="1806" y="522" width="5" height="1" fill="#fff"/>
<rect x="47" y="511" width="3" height="1" fill="#fff"/>
<rect x="1806" y="511" width="3" height="1" fill="#fff"/>
<rect x="45" y="500" width="5" height="1" fill="#fff"/>
<rect x="1806" y="500" width="5" height="1" fill="#fff"/>
<rect x="47" y="489" width="3" height="1" fill="#fff"/>
<rect x="1806" y="489" width="3" height="1" fill="#fff"/>
<rect x="45" y="478" width="5" height="1" fill="#fff"/>
<rect x="1806" y="478" width="5" height="1" fill="#fff"/>
<rect x="47" y="468" width="3" height="1" fill="#fff"/>
<rect x="1806" y="468" width="3" height="1" fill="#fff"/>
<rect x="45" y="457" width="5" height="1" fill="#fff"/>
<rect x="1806" y="457" width="5" height="1" fill="#fff"/>
<rect x="47" y="446" width="3" height="1" fill="#fff"/>
<rect x="1806" y="446" width="3" height="1" fill="#fff"/>
<rect x="45" y="436" width="5" height="1" fill="#fff"/>
<rect x="1806" y="436" width="5" height="1" fill="#fff"/>
<rect x="47" y="425" width="3" height="1" fill="#fff"/>
<rect x="1806" y="425" width="3" height="1" fill="#fff"/>
<rect x="45" y="414" width="5" height="1" fill="#fff"/>
<rect x="1806" y="414" width="5" height="1" fill="#fff"/>
<rect x="47" y="403" width="3" height="1" fill="#fff"/>
<rect x="1806" y="403" width="3" height="1" fill="#fff"/>
<rect x="45" y="392" width="5" height="1" fill="#fff"/>
<rect x="1806" y="392" width="5" height="1" fill="#fff"/>
<rect x="47" y="382" width="3" height="1" fill="#fff"/>
<rect x="1806" y="382" width="3" height="1" fill="#fff"/>
<rect x="45" y="371" width="5" height="1" fill="#fff"/>
<rect x="1806" y="371" width="5" height="1" fill="#fff"/>
<rect x="47" y="360" width="3" height="1" fill="#fff"/>
<rect x="1806" y="360" width="3" height="1" fill="#fff"/>
<rect x="45" y="350" width="5" height="1" fill="#fff"/>
<rect x="1806" y="350" width="5" height="1" fill="#fff"/>
<rect x="47" y="339" width="3" height="1" fill="#fff"/>
<rect x="1806" y="339" width="3" height="1" fill="#fff"/>
<rect x="45" y="328" width="5" height="1" fill="#fff"/>
<rect x="1806" y="328" width="5" height="1" fill="#fff"/>
<rect x="47" y="317" width="3" height="1" fill="#fff"/>
<rect x="1806" y="317" width="3" height="1" fill="#fff"/>
<rect x="45" y="306" width="5" height="1" fill="#fff"/>
<rect x="1806" y="306" width="5" height="1" fill="#fff"/>
<rect x="47" y="296" width="3" height="1" fill="#fff"/>
<rect x="1806" y="296" width="3" height="1" fill="#fff"/>
<rect x="45" y="285" width="5" height="1" fill="#fff"/>
<rect x="1806" y="285" width="5" height="1" fill="#fff"/>
<rect x="47" y="274" width="3" height="1" fill="#fff"/>
<rect x="1806" y="274" width="3" height="1" fill="#fff"/>
<rect x="45" y="264" width="5" height="1" fill="#fff"/>
<rect x="1806" y="264" width="5" height="1" fill="#fff"/>
<rect x="47" y="253" width="3" height="1" fill="#fff"/>
<rect x="1806" y="253" width="3" height="1" fill="#fff"/>
<rect x="45" y="242" width="5" height="1" fill="#fff"/>
<rect x="1806" y="242" width="5" height="1" fill="#fff"/>
<rect x="47" y="231" width="3" height="1" fill="#fff"/>
<rect x="1806" y="231" width="3" height="1" fill="#fff"/>
<rect x="45" y="220" width="5" height="1" fill="#fff"/>
<rect x="1806" y="220" width="5" height="1" fill="#fff"/>
<rect x="47" y="210" width="3" height="1" fill="#fff"/>
<rect x="1806" y="210" width="3" height="1" fill="#fff"/>
<rect x="45" y="199" width="5" height="1" fill="#fff"/>
<rect x="1806" y="199" width="5" height="1" fill="#fff"/>
<rect x="47" y="188" width="3" height="1" fill="#fff"/>
<rect x="1806" y="188" width="3" height="1" fill="#fff"/>
<rect x="45" y="178" width="5" height="1" fill="#fff"/>
<rect x="1806" y="178" width="5" height="1" fill="#fff"/>
<rect x="47" y="167" width="3" height="1" fill="#fff"/>
<rect x="1806" y="167" width="3" height="1" fill="#fff"/>
<rect x="45" y="156" width="5" height="1" fill="#fff"/>
<rect x="1806" y="156" width="5" height="1" fill="#fff"/>
<rect x="47" y="145" width="3" height="1" fill="#fff"/>
<rect x="1806" y="145" width="3" height="1" fill="#fff"/>
<rect x="45" y="134" width="5" height="1" fill="#fff"/>
<rect x="1806" y="134" width="5" height="1" fill="#fff"/>
<rect x="47" y="124" width="3" height="1" fill="#fff"/>
<rect x="1806" y="124" width="3" height="1" fill="#fff"/>
<rect x="45" y="113" width="5" height="1" fill="#fff"/>
<rect x="1806" y="113" width="5" height="1" fill="#fff"/>
<rect x="47" y="102" width="3" height="1" fill="#fff"/>
<rect x="1806" y="102" width="3" height="1" fill="#fff"/>
<rect x="45" y="92" width="5" height="1" fill="#fff"/>
<rect x="1806" y="92" width="5" height="1" fill="#fff"/>
<rect x="47" y="81" width="3" height="1" fill="#fff"/>
<rect x="1806" y="81" width="3" height="1" fill="#fff"/>
<rect x="45" y="70" width="5" height="1" fill="#fff"/>
<rect x="1806" y="70" width="5" height="1" fill="#fff"/>
<rect x="1841" y="74" width="18" height="3" fill="#ee4d8c"/>
<rect x="1841" y="79" width="18" height="857" fill="url(#cbar)"/>
<rect x="1841" y="937" width="18" height="3" fill="#fff"/>
<rect x="0" y="0" width="1834" height="1" fill="#a0a0a0"/>
<rect x="0" y="0" width="1" height="979" fill="#a0a0a0"/>
</svg>
<div id="tx">
<div class="t b" style="left:808px;top:6px;letter-spacing:-0.613px;">AOS</div>
<div class="t b" style="left:837px;top:6px;letter-spacing:-0.195px;">Thu 26 Mar 2026 09:01:43</div>
<div class="t b" style="left:972px;top:6px;letter-spacing:-0.613px;">AOS</div>
<div class="t b" style="left:728px;top:18px;letter-spacing:-0.354px;">CoordSystem:es19</div>
<div class="t b" style="left:832px;top:18px;letter-spacing:-0.418px;">SensorID:es19</div>
<div class="t b" style="left:916px;top:18px;letter-spacing:-0.316px;">Axis:sum</div>
<div class="t b" style="left:976px;top:18px;letter-spacing:-0.542px;">Windowing:Hanning</div>
<div class="t b" style="left:619px;top:30px;letter-spacing:-0.122px;">Cuttoff(Hz):200</div>
<div class="t b" style="left:715px;top:30px;letter-spacing:-0.190px;">df(Hz):0.2441</div>
<div class="t b" style="left:800px;top:30px;letter-spacing:-0.341px;">Sample/Sec:500</div>
<div class="t b" style="left:901px;top:30px;letter-spacing:-0.278px;">PSD size:2048</div>
<div class="t b" style="left:994px;top:30px;letter-spacing:-0.405px;">Overlap(%):0</div>
<div class="t b" style="left:1082px;top:30px;letter-spacing:-0.242px;">TimeRes.(sec):4.096</div>
<div class="t " style="left:41px;top:51px;">3273</div>
<div class="t c" style="left:80px;top:51px;">3300</div>
<div class="t c" style="left:132px;top:51px;">3350</div>
<div class="t c" style="left:184px;top:51px;">3400</div>
<div class="t c" style="left:236px;top:51px;">3450</div>
<div class="t c" style="left:289px;top:51px;">3500</div>
<div class="t c" style="left:341px;top:51px;">3550</div>
<div class="t c" style="left:393px;top:51px;">3600</div>
<div class="t c" style="left:445px;top:51px;">3650</div>
<div class="t c" style="left:497px;top:51px;">3700</div>
<div class="t c" style="left:549px;top:51px;">3750</div>
<div class="t c" style="left:601px;top:51px;">3800</div>
<div class="t c" style="left:653px;top:51px;">3850</div>
<div class="t c" style="left:705px;top:51px;">3900</div>
<div class="t c" style="left:758px;top:51px;">3950</div>
<div class="t c" style="left:810px;top:51px;">4000</div>
<div class="t c" style="left:862px;top:51px;">4050</div>
<div class="t c" style="left:914px;top:51px;">4100</div>
<div class="t c" style="left:966px;top:51px;">4150</div>
<div class="t c" style="left:1018px;top:51px;">4200</div>
<div class="t c" style="left:1070px;top:51px;">4250</div>
<div class="t c" style="left:1122px;top:51px;">4300</div>
<div class="t c" style="left:1175px;top:51px;">4350</div>
<div class="t c" style="left:1227px;top:51px;">4400</div>
<div class="t c" style="left:1279px;top:51px;">4450</div>
<div class="t c" style="left:1331px;top:51px;">4500</div>
<div class="t c" style="left:1383px;top:51px;">4550</div>
<div class="t c" style="left:1435px;top:51px;">4600</div>
<div class="t c" style="left:1487px;top:51px;">4650</div>
<div class="t c" style="left:1539px;top:51px;">4700</div>
<div class="t c" style="left:1591px;top:51px;">4750</div>
<div class="t c" style="left:1644px;top:51px;">4800</div>
<div class="t c" style="left:1696px;top:51px;">4850</div>
<div class="t c" style="left:1748px;top:51px;">4900</div>
<div class="t " style="left:1792px;top:51px;">4953</div>
<div class="t r" style="left:0;width:44px;top:924px;">0</div>
<div class="t r" style="left:0;width:44px;top:902px;">5</div>
<div class="t r" style="left:0;width:44px;top:881px;">10</div>
<div class="t r" style="left:0;width:44px;top:860px;">15</div>
<div class="t r" style="left:0;width:44px;top:838px;">20</div>
<div class="t r" style="left:0;width:44px;top:816px;">25</div>
<div class="t r" style="left:0;width:44px;top:795px;">30</div>
<div class="t r" style="left:0;width:44px;top:774px;">35</div>
<div class="t r" style="left:0;width:44px;top:752px;">40</div>
<div class="t r" style="left:0;width:44px;top:730px;">45</div>
<div class="t r" style="left:0;width:44px;top:709px;">50</div>
<div class="t r" style="left:0;width:44px;top:688px;">55</div>
<div class="t r" style="left:0;width:44px;top:666px;">60</div>
<div class="t r" style="left:0;width:44px;top:644px;">65</div>
<div class="t r" style="left:0;width:44px;top:623px;">70</div>
<div class="t r" style="left:0;width:44px;top:602px;">75</div>
<div class="t r" style="left:0;width:44px;top:580px;">80</div>
<div class="t r" style="left:0;width:44px;top:558px;">85</div>
<div class="t r" style="left:0;width:44px;top:537px;">90</div>
<div class="t r" style="left:0;width:44px;top:516px;">95</div>
<div class="t r" style="left:0;width:44px;top:494px;">100</div>
<div class="t r" style="left:0;width:44px;top:472px;">105</div>
<div class="t r" style="left:0;width:44px;top:451px;">110</div>
<div class="t r" style="left:0;width:44px;top:430px;">115</div>
<div class="t r" style="left:0;width:44px;top:408px;">120</div>
<div class="t r" style="left:0;width:44px;top:386px;">125</div>
<div class="t r" style="left:0;width:44px;top:365px;">130</div>
<div class="t r" style="left:0;width:44px;top:344px;">135</div>
<div class="t r" style="left:0;width:44px;top:322px;">140</div>
<div class="t r" style="left:0;width:44px;top:300px;">145</div>
<div class="t r" style="left:0;width:44px;top:279px;">150</div>
<div class="t r" style="left:0;width:44px;top:258px;">155</div>
<div class="t r" style="left:0;width:44px;top:236px;">160</div>
<div class="t r" style="left:0;width:44px;top:214px;">165</div>
<div class="t r" style="left:0;width:44px;top:193px;">170</div>
<div class="t r" style="left:0;width:44px;top:172px;">175</div>
<div class="t r" style="left:0;width:44px;top:150px;">180</div>
<div class="t r" style="left:0;width:44px;top:128px;">185</div>
<div class="t r" style="left:0;width:44px;top:107px;">190</div>
<div class="t r" style="left:0;width:44px;top:86px;">195</div>
<div class="t r" style="left:0;width:44px;top:64px;">200</div>
<div class="t c" style="left:52px;top:938px;">07:07:15.437</div>
<div class="t c" style="left:52px;top:950px;">03/26/2026</div>
<div class="t c" style="left:170px;top:938px;">07:15:00.000</div>
<div class="t c" style="left:170px;top:950px;">03/26/2026</div>
<div class="t c" style="left:247px;top:938px;">07:20:00.000</div>
<div class="t c" style="left:247px;top:950px;">03/26/2026</div>
<div class="t c" style="left:323px;top:938px;">07:25:00.000</div>
<div class="t c" style="left:323px;top:950px;">03/26/2026</div>
<div class="t c" style="left:399px;top:938px;">07:30:00.000</div>
<div class="t c" style="left:399px;top:950px;">03/26/2026</div>
<div class="t c" style="left:476px;top:938px;">07:35:00.000</div>
<div class="t c" style="left:476px;top:950px;">03/26/2026</div>
<div class="t c" style="left:552px;top:938px;">07:40:00.000</div>
<div class="t c" style="left:552px;top:950px;">03/26/2026</div>
<div class="t c" style="left:628px;top:938px;">07:45:00.000</div>
<div class="t c" style="left:628px;top:950px;">03/26/2026</div>
<div class="t c" style="left:705px;top:938px;">07:50:00.000</div>
<div class="t c" style="left:705px;top:950px;">03/26/2026</div>
<div class="t c" style="left:781px;top:938px;">07:55:00.000</div>
<div class="t c" style="left:781px;top:950px;">03/26/2026</div>
<div class="t c" style="left:857px;top:938px;">08:00:00.000</div>
<div class="t c" style="left:857px;top:950px;">03/26/2026</div>
<div class="t c" style="left:934px;top:938px;">08:05:00.000</div>
<div class="t c" style="left:934px;top:950px;">03/26/2026</div>
<div class="t c" style="left:1010px;top:938px;">08:10:00.000</div>
<div class="t c" style="left:1010px;top:950px;">03/26/2026</div>
<div class="t c" style="left:1086px;top:938px;">08:15:00.000</div>
<div class="t c" style="left:1086px;top:950px;">03/26/2026</div>
<div class="t c" style="left:1163px;top:938px;">08:20:00.000</div>
<div class="t c" style="left:1163px;top:950px;">03/26/2026</div>
<div class="t c" style="left:1239px;top:938px;">08:25:00.000</div>
<div class="t c" style="left:1239px;top:950px;">03/26/2026</div>
<div class="t c" style="left:1315px;top:938px;">08:30:00.000</div>
<div class="t c" style="left:1315px;top:950px;">03/26/2026</div>
<div class="t c" style="left:1392px;top:938px;">08:35:00.000</div>
<div class="t c" style="left:1392px;top:950px;">03/26/2026</div>
<div class="t c" style="left:1468px;top:938px;">08:40:00.000</div>
<div class="t c" style="left:1468px;top:950px;">03/26/2026</div>
<div class="t c" style="left:1544px;top:938px;">08:45:00.000</div>
<div class="t c" style="left:1544px;top:950px;">03/26/2026</div>
<div class="t c" style="left:1621px;top:938px;">08:50:00.000</div>
<div class="t c" style="left:1621px;top:950px;">03/26/2026</div>
<div class="t c" style="left:1697px;top:938px;">08:55:00.000</div>
<div class="t c" style="left:1697px;top:950px;">03/26/2026</div>
<div class="t c" style="left:1803px;top:938px;">09:01:56.717</div>
<div class="t c" style="left:1803px;top:950px;">03/26/2026</div>
<div class="t c" style="left:925px;top:964px;letter-spacing:-0.8px;">Time</div>
<div class="t " style="left:1869px;top:73px;">-5.00</div>
<div class="t " style="left:1869px;top:501px;">-9.00</div>
<div class="t " style="left:1869px;top:930px;">-13.00</div>
<div class="t" style="left:1907px;top:445px;transform-origin:0 0;transform:rotate(90deg) translateY(-100%);">Amplitude(Log10(g^2/Hz))</div>
</div>
</body></html>
